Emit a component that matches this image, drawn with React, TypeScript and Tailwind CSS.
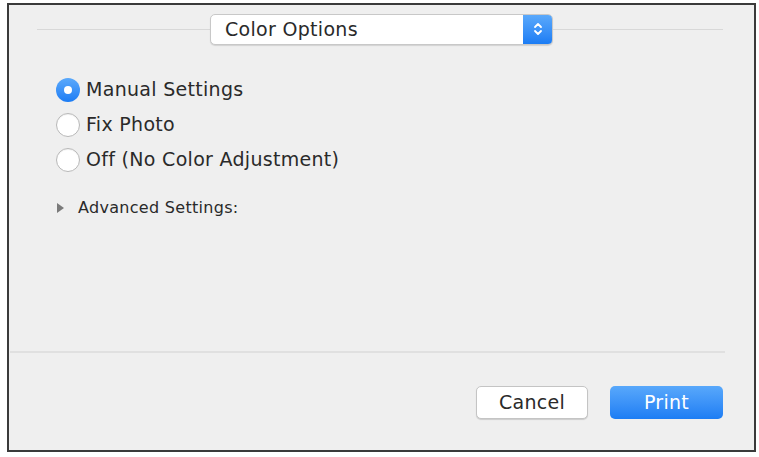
import React from "react";

const font = { fontFamily: '"DejaVu Sans", "Liberation Sans", Arial, sans-serif' };

function Radio({ checked, label }: { checked?: boolean; label: string }) {
  return (
    <div className="flex items-center h-[35px]">
      {checked ? (
        <span className="w-[24px] h-[24px] rounded-full bg-gradient-to-b from-[#5aa9fb] to-[#1a7cf4] flex items-center justify-center">
          <span className="w-[8px] h-[8px] rounded-full bg-white" />
        </span>
      ) : (
        <span className="w-[24px] h-[24px] rounded-full bg-white border border-[#b8b8b8] shadow-[inset_0_1px_1px_rgba(0,0,0,0.06)]" />
      )}
      <span className="ml-[6px] text-[19px] tracking-[0.3px] text-[#2a2a2a]">{label}</span>
    </div>
  );
}

export default function App() {
  return (
    <div className="w-[759px] h-[457px] bg-white pt-[3px] pl-[7px]" style={font}>
      <div className="w-[749px] h-[449px] border-2 border-[#3a3a3a] bg-[#efefef] flex flex-col">
        {/* popup row */}
        <div className="flex items-center mt-[8px] h-[32px]">
          <div className="ml-[28px] w-[173px] h-px bg-[#d8d8d8]" />
          <div className="flex h-[31px] w-[343px] rounded-[5px] bg-white border border-[#c8c8c8] shadow-[0_1px_1px_rgba(0,0,0,0.12)] overflow-hidden">
            <div className="flex-1 flex items-center pl-[14px] text-[19px] tracking-[0.3px] text-[#2a2a2a]">
              Color Options
            </div>
            <div className="w-[29px] bg-gradient-to-b from-[#5aa9fb] to-[#1a7cf4] flex items-center justify-center">
              <svg width="10" height="16" viewBox="0 0 10 16" fill="none" stroke="white" strokeWidth="1.8" strokeLinecap="round" strokeLinejoin="round">
                <path d="M2 6 L5 3 L8 6" />
                <path d="M2 10 L5 13 L8 10" />
              </svg>
            </div>
          </div>
          <div className="w-[170px] h-px bg-[#d8d8d8]" />
        </div>

        {/* radios */}
        <div className="ml-[47px] mt-[27px] flex flex-col">
          <Radio checked label="Manual Settings" />
          <Radio label="Fix Photo" />
          <Radio label="Off (No Color Adjustment)" />
        </div>

        <div className="ml-[48px] mt-[19px] flex items-center gap-[14px] text-[16px] tracking-[0.3px] text-[#2a2a2a]">
          <svg width="7" height="10" viewBox="0 0 7 10">
            <path d="M0 0 L7 5 L0 10 Z" fill="#7a7a7a" />
          </svg>
          <span>Advanced Settings:</span>
        </div>

        <div className="flex-1" />

        <div className="ml-[1px] mr-[29px] h-[2px] bg-[#e0e0e0]" />

        <div className="flex justify-end gap-[22px] mr-[31px] mt-[33px] mb-[31px]">
          <button className="w-[112px] h-[33px] rounded-[5px] bg-white border border-[#c4c4c4] shadow-[0_1px_1px_rgba(0,0,0,0.15)] text-[19px] tracking-[0.3px] text-[#2a2a2a]">
            Cancel
          </button>
          <button className="w-[113px] h-[33px] rounded-[5px] bg-gradient-to-b from-[#58a8fb] to-[#1c7df4] text-[19px] tracking-[0.3px] text-white">
            Print
          </button>
        </div>
      </div>
    </div>
  );
}
